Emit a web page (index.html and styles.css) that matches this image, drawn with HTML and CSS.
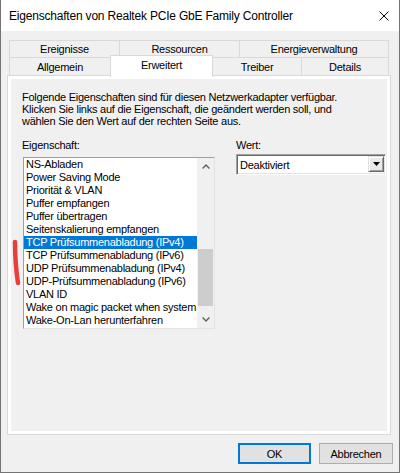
FILE: index.html
```html
<!DOCTYPE html>
<html lang="de">
<head>
<meta charset="utf-8">
<title>Eigenschaften von Realtek PCIe GbE Family Controller</title>
<link rel="stylesheet" href="styles.css">
</head>
<body>
<div class="window">
  <div class="titlebar">
    <span class="title">Eigenschaften von Realtek PCIe GbE Family Controller</span>
    <svg class="close" width="10" height="10" viewBox="0 0 10 10"><path d="M0.5 0.5L9.5 9.5M9.5 0.5L0.5 9.5" stroke="#000" stroke-width="1" fill="none"/></svg>
  </div>
  <div class="sheet">
    <div class="tabs">
      <div class="tabrow row-top">
        <div class="tab t-ereignisse">Ereignisse</div>
        <div class="tab t-ressourcen">Ressourcen</div>
        <div class="tab t-energie">Energieverwaltung</div>
      </div>
      <div class="tabrow row-bottom">
        <div class="tab t-allgemein">Allgemein</div>
        <div class="tab t-erweitert selected">Erweitert</div>
        <div class="tab t-treiber">Treiber</div>
        <div class="tab t-details">Details</div>
      </div>
    </div>
    <div class="panel">
      <div class="page">
        <p class="intro">Folgende Eigenschaften sind für diesen Netzwerkadapter verfügbar.<br>Klicken Sie links auf die Eigenschaft, die geändert werden soll, und<br>wählen Sie den Wert auf der rechten Seite aus.</p>
        <div class="fields">
          <div class="col-left">
            <div class="label">Eigenschaft:</div>
            <div class="listbox">
              <ul class="items">
                <li>NS-Abladen</li>
                <li>Power Saving Mode</li>
                <li>Priorität &amp; VLAN</li>
                <li>Puffer empfangen</li>
                <li>Puffer übertragen</li>
                <li>Seitenskalierung empfangen</li>
                <li class="sel">TCP Prüfsummenabladung (IPv4)</li>
                <li>TCP Prüfsummenabladung (IPv6)</li>
                <li>UDP Prüfsummenabladung (IPv4)</li>
                <li>UDP-Prüfsummenabladung (IPv6)</li>
                <li>VLAN ID</li>
                <li>Wake on magic packet when system</li>
                <li>Wake-On-Lan herunterfahren</li>
              </ul>
              <div class="vscroll">
                <div class="sb-btn"><svg width="8" height="5" viewBox="0 0 8 5"><polyline points="0.6,4.4 4,1 7.4,4.4" fill="none" stroke="#606060" stroke-width="1.4"/></svg></div>
                <div class="sb-track"><div class="sb-thumb"></div></div>
                <div class="sb-btn"><svg width="8" height="5" viewBox="0 0 8 5"><polyline points="0.6,0.6 4,4 7.4,0.6" fill="none" stroke="#606060" stroke-width="1.4"/></svg></div>
              </div>
            </div>
          </div>
          <div class="col-right">
            <div class="label">Wert:</div>
            <div class="combo">
              <span class="combo-text">Deaktiviert</span>
              <span class="combo-btn"><svg width="7" height="4" viewBox="0 0 7 4"><polygon points="0,0 7,0 3.5,4" fill="#000"/></svg></span>
            </div>
          </div>
        </div>
      </div>
    </div>
  </div>
  <div class="buttons">
    <button class="btn btn-default">OK</button>
    <button class="btn">Abbrechen</button>
  </div>
</div>
<svg class="mark" width="14" height="52" viewBox="0 0 14 52"><path d="M5 4 C5 17 6 32 8 45" fill="none" stroke="#e5403a" stroke-width="4.5" stroke-linecap="round"/></svg>
</body>
</html>
```
FILE: styles.css
```css
html, body {
  margin: 0;
  padding: 0;
}

body {
  width: 400px;
  height: 473px;
  overflow: hidden;
  position: relative;
  background: #f0f0f0;
  font-family: "Liberation Sans", Arial, sans-serif;
  font-size: 11px;
  letter-spacing: -0.25px;
  color: #000;
}

.window {
  box-sizing: border-box;
  width: 400px;
  height: 473px;
  border: 1px solid #737373;
  border-top: none;
  display: flex;
  flex-direction: column;
}

.titlebar {
  flex: none;
  height: 31px;
  background: #fff;
  display: flex;
  align-items: center;
  justify-content: space-between;
  padding: 0 10px 0 8px;
}

.title {
  font-size: 12px;
  letter-spacing: -0.2px;
}

.close {
  display: block;
}

.sheet {
  flex: none;
  width: 384px;
  margin: 9px 0 0 6px;
}

.tabs {
  padding: 0 2px;
}

.tabrow {
  display: flex;
  align-items: flex-start;
}

.row-top {
  height: 18px;
}

.row-bottom {
  height: 19px;
  margin-top: -1px;
}

.tab {
  box-sizing: border-box;
  height: 100%;
  border: 1px solid #d9d9d9;
  background: #f0f0f0;
  display: flex;
  align-items: center;
  justify-content: center;
  margin-left: -1px;
  white-space: nowrap;
}

.tab:first-child {
  margin-left: 0;
}

.t-ereignisse { width: 111px; }
.t-ressourcen { width: 121px; }
.t-energie { width: 150px; }
.t-allgemein { width: 102px; }
.t-erweitert { width: 103px; }
.t-treiber { width: 90px; }
.t-details { width: 88px; }

.tab.selected {
  height: 22px;
  margin-top: -2px;
  background: #fff;
  border-bottom: none;
  padding-bottom: 3px;
  position: relative;
  z-index: 1;
}

.panel {
  box-sizing: border-box;
  height: 360px;
  margin-top: -1px;
  border: 1px solid #d9d9d9;
  background: #fff;
  padding: 3px;
}

.page {
  box-sizing: border-box;
  height: 100%;
  background: #f0f0f0;
  padding: 12px 0 0 11px;
}

.intro {
  margin: 0;
  line-height: 12px;
}

.fields {
  display: flex;
  margin-top: 12px;
}

.label {
  height: 12px;
  line-height: 12px;
}

.col-left {
  width: 193px;
}

.col-right {
  width: 150px;
  margin-left: 21px;
}

.listbox {
  box-sizing: border-box;
  width: 192px;
  height: 172px;
  margin: 6px 0 0 1px;
  border: 1px solid;
  border-color: #a0a0a0 #e3e3e3 #e3e3e3 #a0a0a0;
  background: #fff;
  display: flex;
}

.items {
  list-style: none;
  margin: 0;
  padding: 0;
  width: 173px;
  overflow: hidden;
}

.items li {
  height: 13px;
  line-height: 13px;
  padding-left: 2px;
  white-space: nowrap;
}

.items li.sel {
  background: #0078d7;
  color: #fff;
}

.vscroll {
  width: 17px;
  display: flex;
  flex-direction: column;
  background: #f0f0f0;
}

.sb-btn {
  flex: none;
  height: 17px;
  display: flex;
  align-items: center;
  justify-content: center;
}

.sb-btn svg {
  display: block;
}

.sb-track {
  flex: 1;
  padding: 74px 1px 0 1px;
}

.sb-thumb {
  height: 57px;
  background: #cdcdcd;
}

.combo {
  box-sizing: border-box;
  width: 150px;
  height: 21px;
  margin-top: 3px;
  border: 1px solid;
  border-color: #a0a0a0 #fff #fff #a0a0a0;
  box-shadow: inset 1px 1px 0 #696969, inset -1px -1px 0 #e3e3e3;
  padding: 1px;
  background: #fff;
  display: flex;
  align-items: center;
}

.combo-text {
  flex: 1;
  padding-left: 2px;
}

.combo-btn {
  box-sizing: border-box;
  align-self: flex-start;
  width: 16px;
  height: 16px;
  background: #e9e9e9;
  border: 1px solid;
  border-color: #e3e3e3 #696969 #696969 #e3e3e3;
  box-shadow: inset 1px 1px 0 #fff, inset -1px -1px 0 #a0a0a0;
  display: flex;
  align-items: center;
  justify-content: center;
}

.combo-btn svg {
  display: block;
}

.buttons {
  flex: none;
  display: flex;
  justify-content: flex-end;
  gap: 8px;
  margin-top: 8px;
  padding-right: 6px;
}

.btn {
  box-sizing: border-box;
  height: 21px;
  width: 74px;
  padding: 0;
  margin: 0;
  font-family: inherit;
  font-size: 11px;
  letter-spacing: -0.25px;
  color: #000;
  background: #e1e1e1;
  border: 1px solid #adadad;
}

.btn-default {
  width: 73px;
  border: 2px solid #0078d7;
}

.mark {
  position: absolute;
  left: 10px;
  top: 238px;
}
```
